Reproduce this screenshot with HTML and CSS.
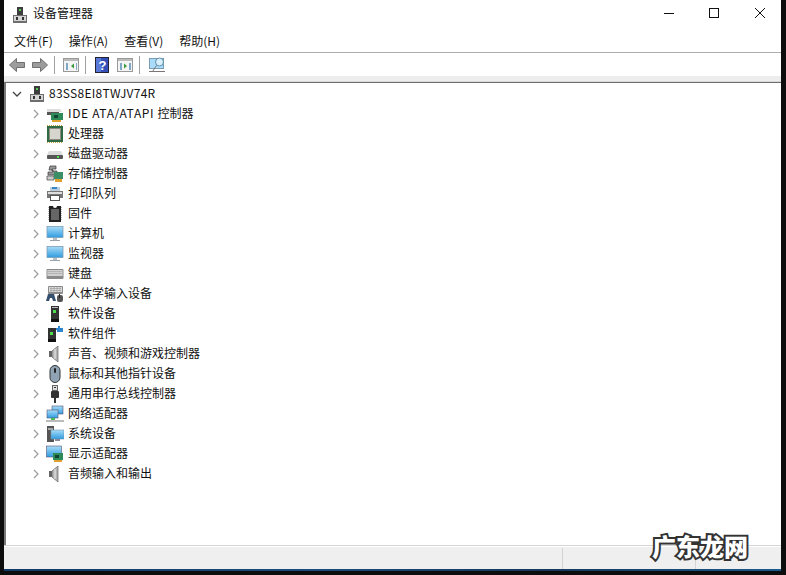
FILE: index.html
```html
<!DOCTYPE html>
<html lang="zh-CN">
<head>
<meta charset="utf-8">
<title>设备管理器</title>
<link rel="stylesheet" href="styles.css">
</head>
<body>
<svg class="defs" width="0" height="0">
  <defs>
    <linearGradient id="scr" x1="0" y1="0" x2="0" y2="1"><stop offset="0" stop-color="#a9dcf8"/><stop offset="1" stop-color="#2f9ce0"/></linearGradient>
    <symbol id="pc" viewBox="0 0 18 18">
      <rect x="6" y="1" width="6" height="8" fill="#3d3d3d"/><rect x="8" y="3" width="2" height="2" fill="#5c5"/>
      <rect x="2" y="9" width="14" height="8" fill="#6e6e6e"/><rect x="3" y="10" width="12" height="5" fill="#d4d4d4"/>
      <rect x="5" y="11" width="2" height="3" fill="#333"/><rect x="11" y="11" width="2" height="3" fill="#333"/>
    </symbol>
    <symbol id="ide" viewBox="0 0 18 18">
      <path d="M1 4h13l2 3H1z" fill="#ddd"/><rect x="1" y="7" width="12" height="3" fill="#555"/>
      <rect x="5" y="8" width="12" height="7" fill="#2f8a5a"/><rect x="8" y="10" width="4" height="3" fill="#143"/><rect x="6" y="15" width="9" height="2" fill="#e0a030"/>
    </symbol>
    <symbol id="cpu" viewBox="0 0 18 18">
      <rect x="1" y="1" width="16" height="16" fill="#2e6b45"/><rect x="3.500" y="3.500" width="11" height="11" fill="#d6d6ce" stroke="#8a8a80"/>
      <path d="M1 .500h16M1 17.500h16" stroke="#c9a040" stroke-dasharray="1 1"/>
    </symbol>
    <symbol id="disk" viewBox="0 0 18 18">
      <path d="M3 6h12l2 4H1z" fill="#dcdcdc"/><rect x="1" y="10" width="16" height="4" rx="1" fill="#555"/><rect x="11" y="11" width="2" height="2" fill="#5d5"/>
    </symbol>
    <symbol id="store" viewBox="0 0 18 18">
      <path d="M4 1h6v3H6v2h5v4H2V7h5V5H3z" fill="#999" stroke="#333" stroke-width=".7"/><path d="M1 11h7v4H1z" fill="#ccc" stroke="#444" stroke-width=".7"/>
      <rect x="8" y="7" width="9" height="7" fill="#3a8f66"/><rect x="9" y="14" width="7" height="3" fill="#e0a030"/>
    </symbol>
    <symbol id="printer" viewBox="0 0 18 18">
      <rect x="4" y="2" width="10" height="4" fill="#bcd"/><rect x="6" y="2" width="5" height="2" fill="#38c"/><rect x="1" y="6" width="16" height="7" fill="#777"/><rect x="2" y="7" width="14" height="2" fill="#ddd"/><rect x="4.500" y="10.500" width="9" height="5" fill="#fff" stroke="#555"/>
    </symbol>
    <symbol id="chip" viewBox="0 0 18 18">
      <path d="M3 1h4a2 2 0 0 0 4 0h4v16H3z" fill="#222"/><path d="M5 4h8v11H5z" fill="#666"/><path d="M2.500 2v14M15.500 2v14" stroke="#bbb" stroke-dasharray="1 1"/>
    </symbol>
    <symbol id="monitor" viewBox="0 0 18 18">
      <rect x="1" y="1.500" width="16" height="11" fill="url(#scr)" stroke="#7c9db4" stroke-width=".8"/><rect x="7" y="13" width="4" height="2" fill="#b8bec4"/><rect x="4" y="15" width="10" height="1" fill="#9aa2aa"/>
    </symbol>
    <symbol id="kbd" viewBox="0 0 18 18">
      <rect x="0.500" y="4" width="17" height="10" rx="1" fill="#8a8a8a"/><rect x="1.500" y="5" width="15" height="6" fill="#e2e2e2"/><path d="M2 6.500h14M2 8.500h14M3 5v6M5 5v6M7 5v6M9 5v6M11 5v6M13 5v6M15 5v6" stroke="#999" stroke-width=".5"/>
    </symbol>
    <symbol id="hid" viewBox="0 0 18 18">
      <rect x="2" y="1" width="15" height="8" rx="1" fill="#8a8a8a"/><rect x="3" y="2" width="13" height="5" fill="#ddd"/><path d="M4 3.500h11M4 5.500h11M5 2v5M8 2v5M11 2v5M14 2v5" stroke="#888" stroke-width=".5"/>
      <path d="M0 16l2-7h6l2 7H7L6 13H4l-1 3z" fill="#35506e"/><rect x="11" y="10" width="6" height="7" rx="2" fill="#555"/><rect x="13" y="9" width="1" height="4" fill="#222"/>
    </symbol>
    <symbol id="soft" viewBox="0 0 18 18">
      <rect x="5" y="1" width="8" height="16" fill="#333"/><rect x="6" y="2" width="6" height="1" fill="#bbb"/><rect x="7" y="5" width="3" height="3" fill="#4ce04c"/><rect x="5" y="14" width="8" height="3" fill="#111"/>
    </symbol>
    <symbol id="softc" viewBox="0 0 18 18">
      <rect x="2" y="3" width="8" height="14" fill="#333"/><rect x="4" y="7" width="3" height="3" fill="#4ce04c"/><rect x="2" y="14" width="8" height="3" fill="#111"/>
      <path d="M12 1h2v2h3v4h-6V5H10V3h2z" fill="#2f86d0"/>
    </symbol>
    <symbol id="audio" viewBox="0 0 18 18">
      <path d="M3 6h3v6H3z" fill="#666"/><path d="M6 6l6-5v16l-6-5z" fill="#b4b4b4" stroke="#666" stroke-width=".7"/><path d="M9 4v10" stroke="#eee"/>
    </symbol>
    <symbol id="mouse" viewBox="0 0 18 18">
      <rect x="4" y="0.500" width="10" height="17" rx="5" fill="#8fa3b5" stroke="#333"/><rect x="8" y="3" width="2" height="5" rx="1" fill="#222"/>
    </symbol>
    <symbol id="usb" viewBox="0 0 18 18">
      <rect x="6.500" y="0.500" width="5" height="5" fill="#ddd" stroke="#666"/><rect x="8" y="2" width="2" height="1" fill="#333"/>
      <rect x="5" y="6" width="8" height="7" rx="1" fill="#333"/><rect x="8" y="13" width="2" height="5" fill="#333"/>
    </symbol>
    <symbol id="net" viewBox="0 0 18 18">
      <rect x="6" y="1" width="11" height="8" fill="url(#scr)" stroke="#557" stroke-width=".6"/><rect x="1" y="5" width="11" height="8" fill="url(#scr)" stroke="#557" stroke-width=".6"/>
      <rect x="0" y="15" width="18" height="2" fill="#bbb"/><path d="M5 13h4v2H5z" fill="#4fb84f"/>
    </symbol>
    <symbol id="sys" viewBox="0 0 18 18">
      <rect x="1" y="1" width="7" height="16" fill="#555"/><rect x="2" y="3" width="5" height="2" fill="#aaa"/>
      <rect x="5" y="5" width="13" height="9" fill="url(#scr)" stroke="#6f98b2" stroke-width=".6"/>
      <rect x="9" y="14" width="5" height="2" fill="#889"/>
    </symbol>
    <symbol id="disp" viewBox="0 0 18 18">
      <rect x="0.500" y="1" width="15" height="11" fill="url(#scr)" stroke="#557" stroke-width=".6"/>
      <rect x="7" y="8" width="10" height="7" fill="#2f8a5a"/><rect x="9" y="10" width="4" height="3" fill="#143"/><rect x="8" y="15" width="8" height="2" fill="#e0a030"/>
    </symbol>
    <symbol id="chevr" viewBox="0 0 10 10"><path d="M3 1l4 4-4 4" fill="none" stroke="#a0a0a0" stroke-width="1.300"/></symbol>
  </defs>
</svg>
<div class="window">
  <header class="titlebar">
    <svg class="title-icon"><use href="#pc"/></svg>
    <span class="title-text">设备管理器</span>
    <div class="wincontrols">
      <svg class="wc" viewBox="0 0 46 30"><path d="M21 13.500h10" stroke="#111"/></svg>
      <svg class="wc" viewBox="0 0 46 30"><rect x="20.500" y="8.500" width="9" height="9" fill="none" stroke="#111"/></svg>
      <svg class="wc" viewBox="0 0 46 30"><path d="M20 8l10 10M30 8L20 18" stroke="#111" fill="none"/></svg>
    </div>
  </header>
  <nav class="menubar">
    <span>文件(F)</span><span>操作(A)</span><span>查看(V)</span><span>帮助(H)</span>
  </nav>
  <div class="toolbar">
    <svg class="tool" viewBox="0 0 16 16"><path d="M.5 8l7-6.500v4h8v5h-8v4z" fill="#9c9c9c" stroke="#707070"/></svg>
    <svg class="tool tool-next" viewBox="0 0 16 16"><path d="M15.500 8l-7-6.500v4h-8v5h8v4z" fill="#9c9c9c" stroke="#707070"/></svg>
    <i class="sep"></i>
    <svg class="tool" viewBox="0 0 16 16"><rect x=".5" y="1.500" width="15" height="13" fill="#f4f4f4" stroke="#999"/><rect x="1" y="2" width="14" height="2" fill="#bbb"/><path d="M3 6h2v7H3z" fill="#7fa8c8"/><path d="M11 6.500v5l-3-2.500z" fill="#3a9a3a"/><path d="M13 6h1v7h-1z" fill="#7fa8c8"/></svg>
    <i class="sep"></i>
    <svg class="tool help" viewBox="0 0 14 16"><rect x=".5" y=".5" width="13" height="15" fill="#3450b8" stroke="#223"/><rect x="1" y="1" width="5" height="14" fill="#5a78d8"/><text class="qmark" x="3.500" y="13">?</text></svg>
    <svg class="tool" viewBox="0 0 16 16"><rect x=".5" y="1.500" width="15" height="13" fill="#f4f4f4" stroke="#999"/><rect x="1" y="2" width="14" height="2" fill="#bbb"/><path d="M3 6h2v7H3z" fill="#7fa8c8"/><path d="M7 6.500v5l3-2.500z" fill="#3a9a3a"/><path d="M12 6h2v7h-2z" fill="#7fa8c8"/></svg>
    <i class="sep"></i>
    <svg class="tool tool-next" viewBox="0 0 16 16"><rect x=".5" y="1.500" width="14" height="10" fill="#a9dcf8" stroke="#7a9cb4"/><circle cx="10.500" cy="5" r="4" fill="#d8f0fc" stroke="#5f8ea8"/><path d="M7.500 8.500l-4 6M0 14.500h16" stroke="#777" fill="none"/></svg>
  </div>
  <div class="toolgap"></div>
  <main class="tree">
    <div class="row root"><svg class="chev" viewBox="0 0 10 10"><path d="M1 3l4 4 4-4" fill="none" stroke="#444" stroke-width="1.300"/></svg><svg class="icon"><use href="#pc"/></svg><span class="label latin-root">83SS8EI8TWJV74R</span></div>
    <div class="row"><svg class="chev"><use href="#chevr"/></svg><svg class="icon"><use href="#ide"/></svg><span class="label"><span class="latin">IDE ATA/ATAPI </span>控制器</span></div>
    <div class="row"><svg class="chev"><use href="#chevr"/></svg><svg class="icon"><use href="#cpu"/></svg><span class="label">处理器</span></div>
    <div class="row"><svg class="chev"><use href="#chevr"/></svg><svg class="icon"><use href="#disk"/></svg><span class="label">磁盘驱动器</span></div>
    <div class="row"><svg class="chev"><use href="#chevr"/></svg><svg class="icon"><use href="#store"/></svg><span class="label">存储控制器</span></div>
    <div class="row"><svg class="chev"><use href="#chevr"/></svg><svg class="icon"><use href="#printer"/></svg><span class="label">打印队列</span></div>
    <div class="row"><svg class="chev"><use href="#chevr"/></svg><svg class="icon"><use href="#chip"/></svg><span class="label">固件</span></div>
    <div class="row"><svg class="chev"><use href="#chevr"/></svg><svg class="icon"><use href="#monitor"/></svg><span class="label">计算机</span></div>
    <div class="row"><svg class="chev"><use href="#chevr"/></svg><svg class="icon"><use href="#monitor"/></svg><span class="label">监视器</span></div>
    <div class="row"><svg class="chev"><use href="#chevr"/></svg><svg class="icon"><use href="#kbd"/></svg><span class="label">键盘</span></div>
    <div class="row"><svg class="chev"><use href="#chevr"/></svg><svg class="icon"><use href="#hid"/></svg><span class="label">人体学输入设备</span></div>
    <div class="row"><svg class="chev"><use href="#chevr"/></svg><svg class="icon"><use href="#soft"/></svg><span class="label">软件设备</span></div>
    <div class="row"><svg class="chev"><use href="#chevr"/></svg><svg class="icon"><use href="#softc"/></svg><span class="label">软件组件</span></div>
    <div class="row"><svg class="chev"><use href="#chevr"/></svg><svg class="icon"><use href="#audio"/></svg><span class="label">声音、视频和游戏控制器</span></div>
    <div class="row"><svg class="chev"><use href="#chevr"/></svg><svg class="icon"><use href="#mouse"/></svg><span class="label">鼠标和其他指针设备</span></div>
    <div class="row"><svg class="chev"><use href="#chevr"/></svg><svg class="icon"><use href="#usb"/></svg><span class="label">通用串行总线控制器</span></div>
    <div class="row"><svg class="chev"><use href="#chevr"/></svg><svg class="icon"><use href="#net"/></svg><span class="label">网络适配器</span></div>
    <div class="row"><svg class="chev"><use href="#chevr"/></svg><svg class="icon"><use href="#sys"/></svg><span class="label">系统设备</span></div>
    <div class="row"><svg class="chev"><use href="#chevr"/></svg><svg class="icon"><use href="#disp"/></svg><span class="label">显示适配器</span></div>
    <div class="row"><svg class="chev"><use href="#chevr"/></svg><svg class="icon"><use href="#audio"/></svg><span class="label">音频输入和输出</span></div>
  </main>
  <footer class="statusbar"><div class="cell-a"></div><div class="cell-b"></div><div class="cell-c"></div></footer>
</div>
<div class="taskstrip"></div>
<div class="watermark">广东龙网</div>
</body>
</html>
```
FILE: styles.css
```css
* { box-sizing: border-box; }
html, body { margin: 0; height: 100%; }
body {
  width: 786px;
  height: 575px;
  overflow: hidden;
  background: #0d0d0d;
  position: relative;
  font-family: "Noto Sans CJK SC", "Liberation Sans", sans-serif;
  font-size: 12px;
  color: #111;
}
.defs { position: absolute; }
.window {
  margin-left: 4px;
  width: 777px;
  height: 569px;
  background: #fff;
  display: flex;
  flex-direction: column;
}
.titlebar { height: 30px; display: flex; align-items: center; padding-left: 7px; flex: none; }
.title-icon { width: 18px; height: 18px; margin-right: 4px; }
.title-text { flex: 1; padding-bottom: 6px; }
.wincontrols { display: flex; }
.wc { width: 46px; height: 30px; }
.menubar {
  height: 23px;
  flex: none;
  display: flex;
  align-items: center;
  gap: 16px;
  padding-left: 10px;
  padding-bottom: 2px;
  border-bottom: 1px solid #acacac;
}
.toolbar {
  height: 23px;
  flex: none;
  display: flex;
  align-items: center;
  padding-left: 5px;
  gap: 6px;
}
.tool { width: 16px; height: 16px; }
.tool-next { margin-left: 1px; }
.help { width: 14px; margin-left: 1px; margin-right: 2px; }
.sep { width: 1px; height: 18px; background: #a0a0a0; margin-right: 2px; }
.qmark { font: bold 13px "Liberation Sans", sans-serif; fill: #fff; }
.toolgap { height: 6px; flex: none; background: #ededed; border-bottom: 1px solid #d8d8d8; }
.tree {
  flex: 1;
  border-top: 1px solid #6d6d6d;
  border-left: 2px solid #7a7a7a;
  min-height: 0;
}
.row { height: 20px; display: flex; align-items: center; padding-left: 25px; }
.root { padding-left: 6px; }
.chev { width: 10px; height: 10px; flex: none; margin-right: 5px; margin-top: 2px; }
.root .chev { margin-right: 6px; }
.icon { width: 18px; height: 18px; flex: none; margin-right: 4px; margin-top: 2px; }
.root .icon { margin-right: 3px; }
.label { padding-bottom: 2px; white-space: pre; }
.latin { letter-spacing: .65px; }
.latin-root { letter-spacing: .27px; }
.statusbar {
  height: 24px;
  flex: none;
  display: flex;
  background: #efefef;
  border-top: 1px solid #d4d4d4;
  box-shadow: inset 0 1px 0 #fff;
}
.cell-a { width: 558px; }
.cell-b { width: 133px; border-left: 1px solid #d4d4d4; margin-top: 2px; }
.cell-c { flex: 1; border-left: 1px solid #d4d4d4; margin-top: 2px; }
.taskstrip { height: 2px; width: 777px; margin-left: 4px; background: linear-gradient(90deg, #123a66, #1c4c7c 40%, #16385c 70%, #1b5a8c); }
.watermark {
  position: absolute;
  left: 652px;
  top: 528px;
  font-size: 24px;
  font-weight: 900;
  color: #fff;
  -webkit-text-stroke: 4px #333;
  paint-order: stroke fill;
  white-space: nowrap;
}
```
